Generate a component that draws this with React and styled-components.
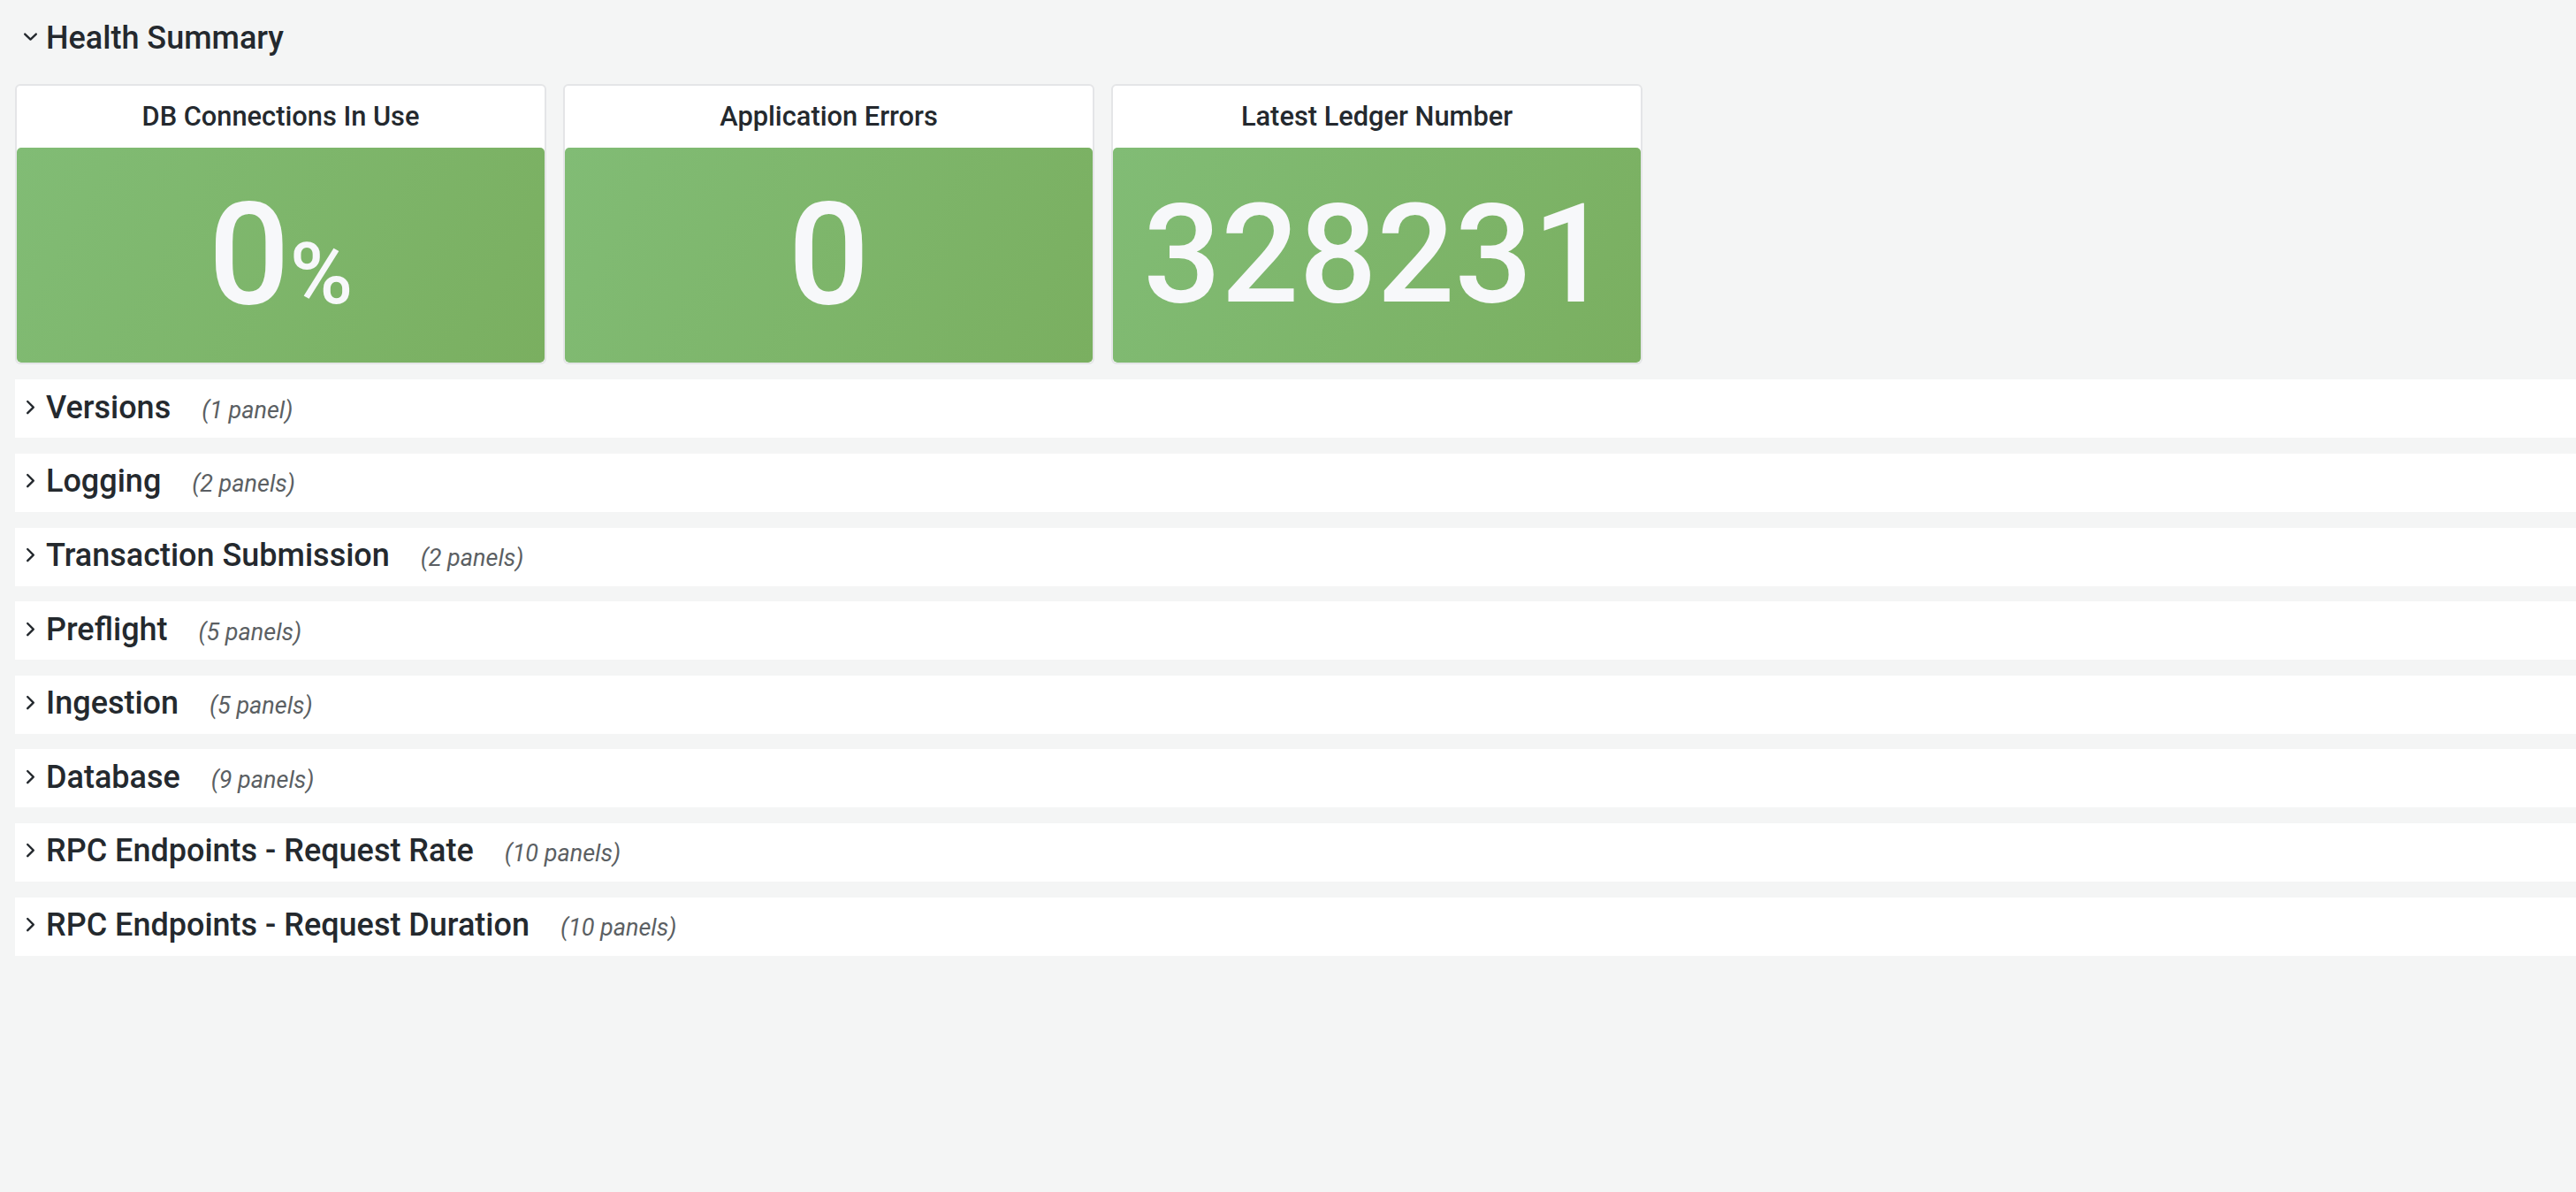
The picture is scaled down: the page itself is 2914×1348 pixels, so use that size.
import React from 'react';
import styled, { createGlobalStyle } from 'styled-components';

const GlobalStyle = createGlobalStyle`
    html, body {
        margin: 0;
        padding: 0;
        background: #f4f5f5;
        overflow: hidden;
    }
    body {
        font-family: Roboto, "Liberation Sans", Arial, sans-serif;
        color: #24292e;
    }
`;

const stats = [
    { title: 'DB Connections In Use', value: '0', unit: '%', size: 162 },
    { title: 'Application Errors', value: '0', size: 162 },
    { title: 'Latest Ledger Number', value: '328231', size: 155 },
];

const rows = [
    { title: 'Versions', count: '(1 panel)' },
    { title: 'Logging', count: '(2 panels)' },
    { title: 'Transaction Submission', count: '(2 panels)' },
    { title: 'Preflight', count: '(5 panels)' },
    { title: 'Ingestion', count: '(5 panels)' },
    { title: 'Database', count: '(9 panels)' },
    { title: 'RPC Endpoints - Request Rate', count: '(10 panels)' },
    { title: 'RPC Endpoints - Request Duration', count: '(10 panels)' },
];

const ChevronDown = () => (
    <Icon viewBox="0 0 20 20">
        <polyline points="3.2,5.6 9.5,11.6 15.8,5.6" />
    </Icon>
);

const ChevronRight = () => (
    <Icon viewBox="0 0 20 20">
        <polyline points="6.2,3 12.8,9.6 6.2,16.2" />
    </Icon>
);

const StatPanel = ({ title, value, unit, size }) => (
    <Panel>
        <PanelHeader>{title}</PanelHeader>
        <StatBody>
            <Value $size={size}>
                {value}
                {unit && <Unit>{unit}</Unit>}
            </Value>
        </StatBody>
    </Panel>
);

const App = () => {
    return (
        <>
            <GlobalStyle />
            <Dashboard>
                <RowHeader>
                    <ChevronDown />
                    <TitleGroup>
                        <RowTitle>Health Summary</RowTitle>
                    </TitleGroup>
                </RowHeader>
                <PanelGrid>
                    {stats.map((s) => (
                        <StatPanel key={s.title} {...s} />
                    ))}
                </PanelGrid>
                {rows.map((r) => (
                    <RowHeader key={r.title} $collapsed>
                        <ChevronRight />
                        <TitleGroup>
                            <RowTitle>{r.title}</RowTitle>
                            <RowCount>{r.count}</RowCount>
                        </TitleGroup>
                    </RowHeader>
                ))}
            </Dashboard>
        </>
    );
};

const Dashboard = styled.div`
    display: flex;
    flex-direction: column;
    gap: 17.6px;
    padding: 11.4px 0 0 17px;
    width: 100%;
    box-sizing: border-box;
`;

const RowHeader = styled.div`
    display: flex;
    align-items: center;
    height: 66px;
    padding: 0 0 3px 8px;
    box-sizing: border-box;
    background: ${(p) => (p.$collapsed ? '#ffffff' : 'transparent')};
`;

const Icon = styled.svg`
    width: 20px;
    height: 20px;
    flex: none;
    margin-right: 7px;
    fill: none;
    stroke: #24292e;
    stroke-width: 2.4;
    stroke-linecap: round;
    stroke-linejoin: round;
`;

const TitleGroup = styled.div`
    display: flex;
    align-items: baseline;
`;

const RowTitle = styled.span`
    font-size: 36px;
    font-weight: 500;
    color: #24292e;
    white-space: nowrap;
`;

const RowCount = styled.span`
    margin-left: 35px;
    font-size: 27px;
    font-style: italic;
    color: #5b5f63;
    white-space: nowrap;
`;

const PanelGrid = styled.div`
    display: grid;
    grid-template-columns: repeat(3, 601px);
    gap: 19px;
    height: 316.8px;
`;

const Panel = styled.div`
    display: flex;
    flex-direction: column;
    background: #ffffff;
    border: 2px solid #e4e5e7;
    border-radius: 6px;
    overflow: hidden;
`;

const PanelHeader = styled.div`
    height: 70px;
    flex: none;
    display: flex;
    align-items: center;
    justify-content: center;
    font-size: 30.8px;
    font-weight: 500;
    color: #24292e;
`;

const StatBody = styled.div`
    flex: 1;
    display: flex;
    align-items: center;
    justify-content: center;
    border-radius: 5px;
    background: linear-gradient(120deg, #81bc75, #7aaf60);
`;

const Value = styled.div`
    font-size: ${(p) => p.$size}px;
    line-height: 1;
    font-weight: 500;
    color: #f7f8fa;
    white-space: nowrap;
`;

const Unit = styled.span`
    font-size: 0.6em;
`;

export default App;
